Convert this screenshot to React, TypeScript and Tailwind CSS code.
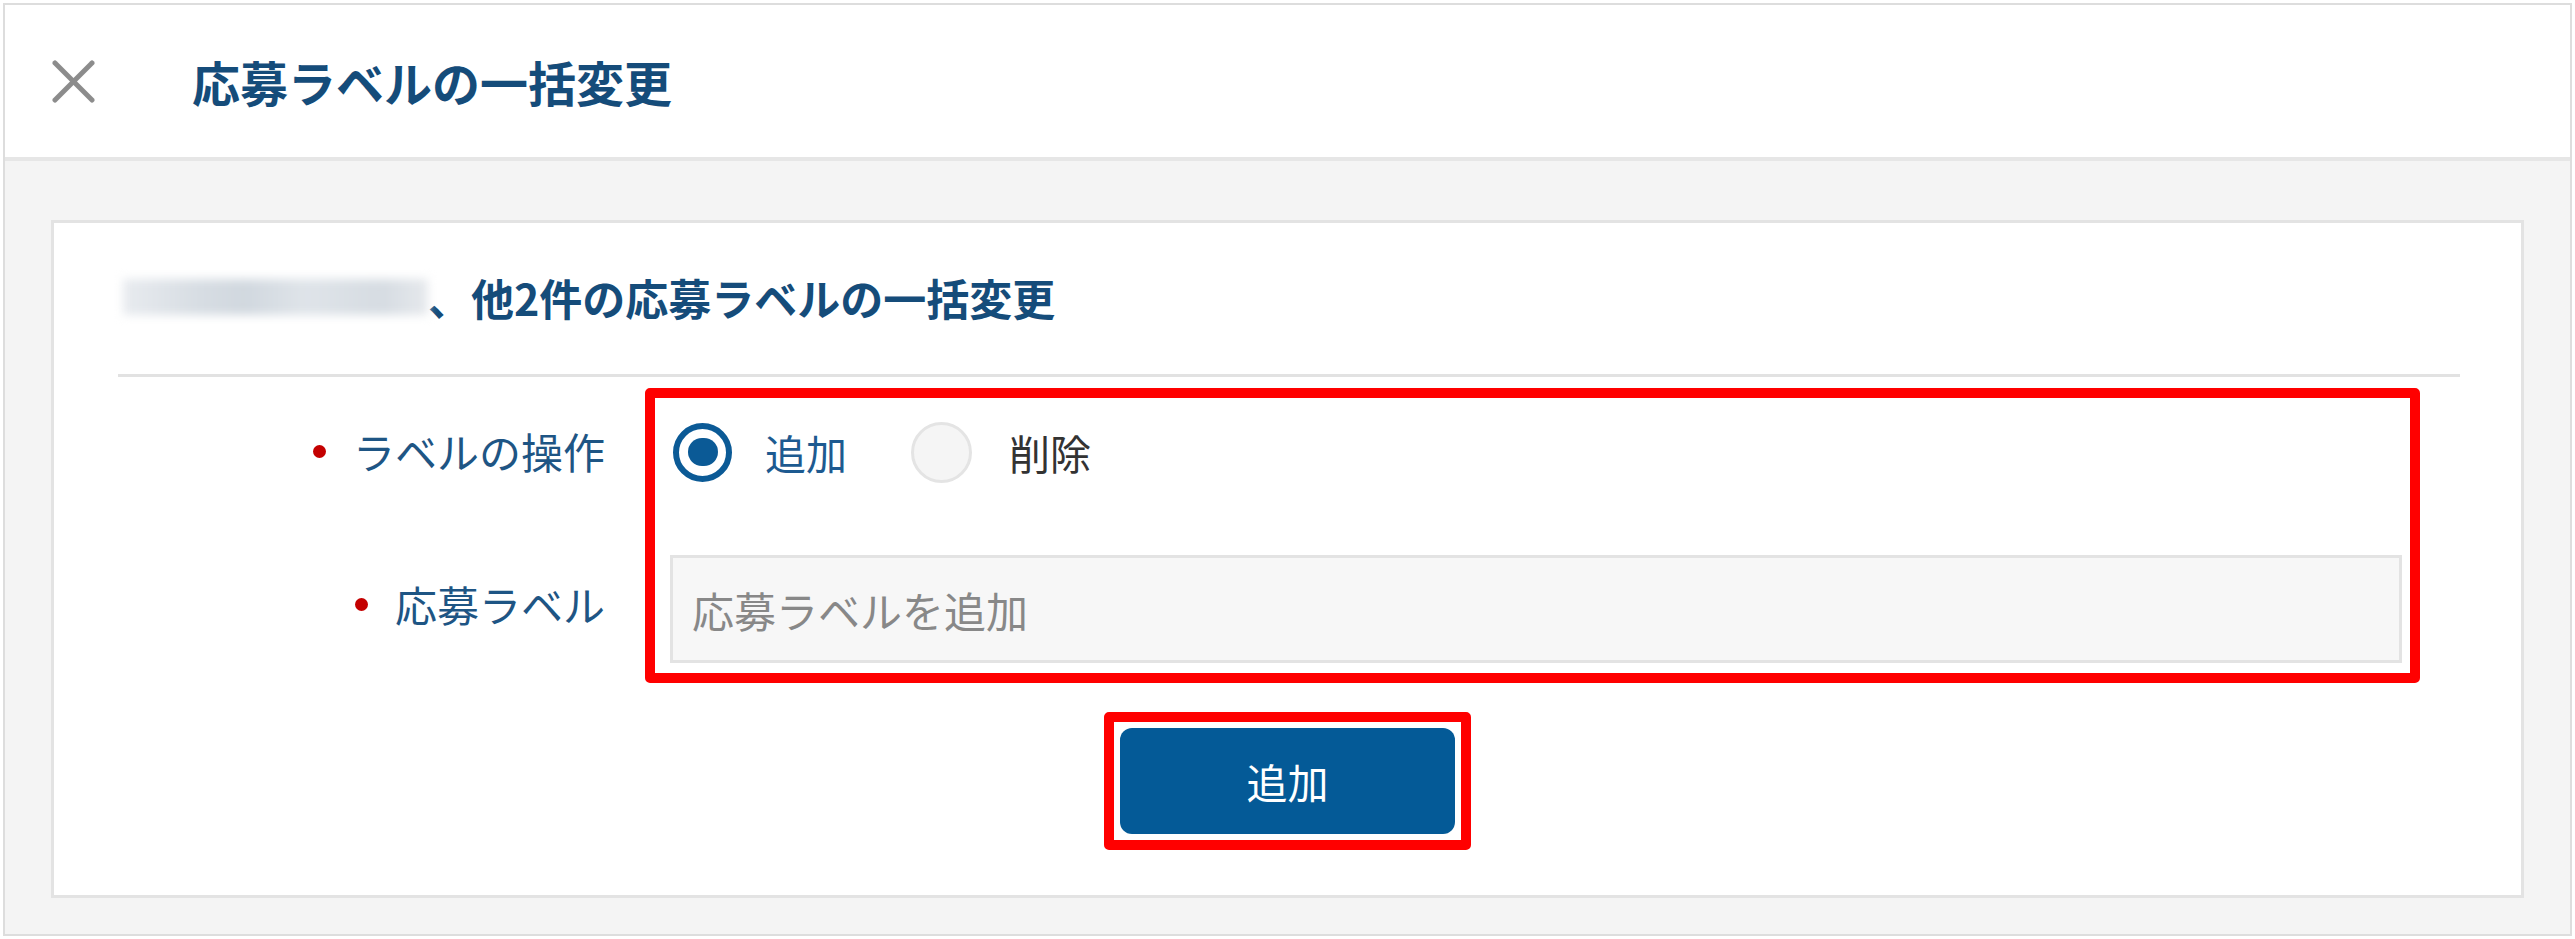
import React from "react";

export default function App() {
  return (
    <div className="w-[2575px] h-[939px] bg-white p-[3px] font-['Noto_Sans_CJK_JP','Noto_Sans',sans-serif]">
      <div className="h-full border-2 border-[#dddddd] flex flex-col">
        {/* Header */}
        <div className="h-[156px] shrink-0 bg-white border-b-4 border-[#e6e6e6] flex items-center pl-[47px]">
          <svg width="43" height="43" viewBox="0 0 43 43" className="shrink-0">
            <line x1="3" y1="3" x2="40" y2="40" stroke="#8c8c8c" strokeWidth="5" strokeLinecap="round" />
            <line x1="40" y1="3" x2="3" y2="40" stroke="#8c8c8c" strokeWidth="5" strokeLinecap="round" />
          </svg>
          <h1 className="ml-[97px] text-[48px] leading-none font-bold text-[#154c7a]">
            応募ラベルの一括変更
          </h1>
        </div>

        {/* Body */}
        <div className="flex-1 bg-[#f4f4f4] pt-[59px] pb-[36px] px-[46px] flex">
          <div className="flex-1 bg-white border-[3px] border-[#e3e3e3] flex flex-col">
            {/* Subtitle */}
            <div className="mt-[46px] ml-[69px] h-[56px] flex items-center">
              <div className="w-[305px] h-[36px] blur-[5px] bg-[linear-gradient(90deg,#e8ebef,#d7dde3_25%,#d1d8df_40%,#dfe4e9_60%,#d6dce2_85%,#e6e9ed)]" />
              <span className="text-[43px] font-bold text-[#154c7a] leading-none">
                、他2件の応募ラベルの一括変更
              </span>
            </div>
            <div className="mt-[49px] ml-[64px] mr-[61px] h-[3px] bg-[#e2e2e2]" />

            {/* Form */}
            <div className="mt-[11px] flex">
              <div className="w-[551px] shrink-0 pt-[10px] flex flex-col gap-[49px]">
                <div className="h-[108px] flex items-center justify-end pb-[2px]">
                  <span className="w-[13px] h-[13px] rounded-full bg-[#c40000] mr-[27px]" />
                  <span className="text-[42px] leading-none text-[#1e5584]">ラベルの操作</span>
                </div>
                <div className="h-[108px] flex items-center justify-end pb-[10px]">
                  <span className="w-[13px] h-[13px] rounded-full bg-[#c40000] mr-[27px]" />
                  <span className="text-[42px] leading-none text-[#1e5584]">応募ラベル</span>
                </div>
              </div>

              <div className="ml-[40px] mr-[101px] flex-1 border-[10px] border-[#ff0000] rounded-[5px] pl-[15px] pr-[8px] flex flex-col gap-[49px] pb-[10px]">
                <div className="h-[108px] flex items-center pl-[3px]">
                  <span className="w-[59px] h-[59px] rounded-full border-[6px] border-[#0b5a96] flex items-center justify-center shrink-0">
                    <span className="w-[30px] h-[28px] rounded-full bg-[#0b5a96]" />
                  </span>
                  <span className="ml-[33px] text-[41px] leading-none text-[#1d5a90]">追加</span>
                  <span className="ml-[64px] w-[61px] h-[61px] rounded-full border-[3px] border-[#e4e4e4] bg-[#f5f5f5] shrink-0" />
                  <span className="ml-[37px] text-[41px] leading-none text-[#333333]">削除</span>
                </div>
                <input
                  readOnly
                  placeholder="応募ラベルを追加"
                  className="h-[108px] w-full border-[3px] border-[#e3e3e3] bg-[#f7f7f7] pl-[19px] text-[42px] outline-none placeholder:text-[#888888] font-['Noto_Sans_CJK_JP',sans-serif]"
                />
              </div>
            </div>

            {/* Submit */}
            <div className="mt-[29px] flex justify-center">
              <div className="border-[10px] border-[#ff0000] rounded-[5px] p-[6px]">
                <button className="w-[335px] h-[106px] bg-[#045a97] rounded-[12px] text-white text-[41px] leading-none flex items-center justify-center">
                  追加
                </button>
              </div>
            </div>
          </div>
        </div>
      </div>
    </div>
  );
}
